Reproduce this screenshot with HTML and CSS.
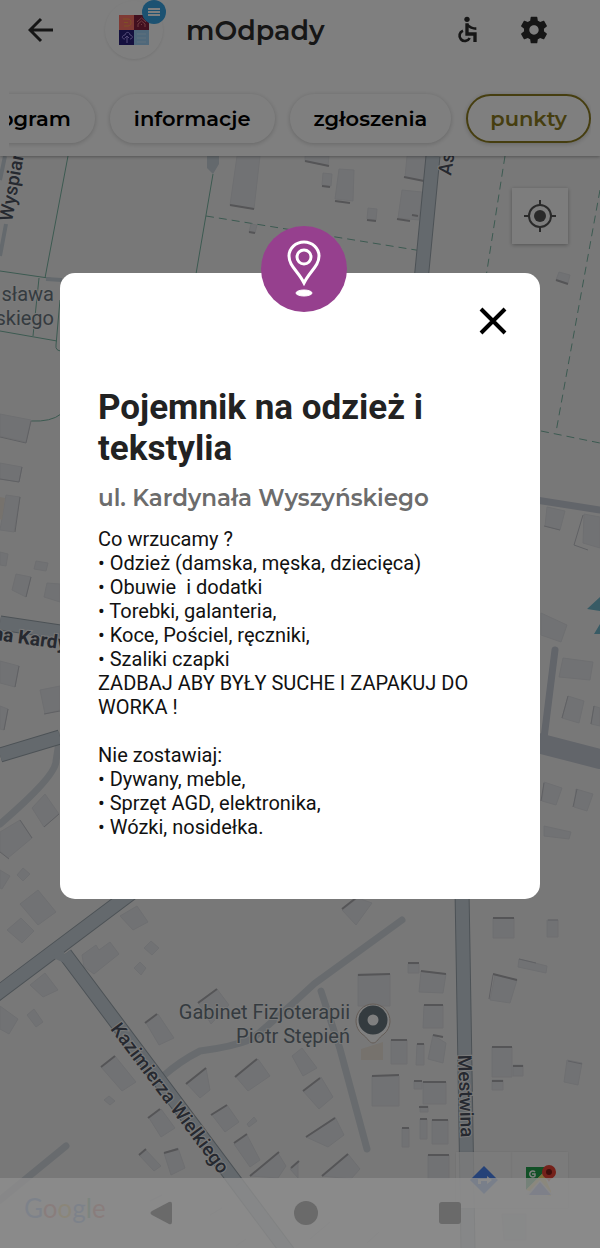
FILE: index.html
```html
<!DOCTYPE html>
<html lang="pl">

<head>
    <meta charset="UTF-8">
    <meta name="viewport" content="width=device-width, initial-scale=1.0">
    <title>mOdpady</title>
    <link rel="stylesheet" href="styles.css">
</head>

<body>
    <header class="header">
        <div class="top-bar">
            <button type="button" class="icon-btn back" aria-label="Wstecz">
                <svg width="26" height="26" viewBox="0 0 26 26" fill="none" stroke="#2c2c2c" stroke-width="3">
                    <path d="M25 13H3M13 2L2 13l11 11" />
                </svg>
            </button>
            <div class="logo">
                <svg width="30" height="30" viewBox="0 0 30 30">
                    <path fill="#ff7468" d="M0 0h15v15H0z" />
                    <path fill="#85203f" d="M15 0h15v15H15z" />
                    <path fill="#28207c" d="M0 15h15v15H0z" />
                    <path fill="#9ed0f4" d="M15 15h15v15H15z" />
                    <path fill="none" stroke="#ffa04a" stroke-width="1" d="M4 4h5c4 0 4 7 0 7H5M5 7.500h4" />
                    <path fill="none" stroke="#e07884" stroke-width="1" d="M18 7l4.500-4L27 7M19 12v-3l3.500-3L26 9v3M22.500 9v1" />
                    <path fill="none" stroke="#a898f0" stroke-width="1" d="M6 24c-4 0-3-4 0-4 1-4 5-3 5 0 3 0 3 4 0 4M8 28v-7M6 23l2-2 2 2" />
                    <path fill="none" stroke="#c0e2fa" stroke-width="1" d="M18 19h9M18 23h9M18 27h9" />
                </svg>
                <span class="badge">
                    <svg width="12" height="8" viewBox="0 0 12 8" stroke="#fff" stroke-width="2">
                        <path d="M0 1h12M0 4h12M0 7h12" />
                    </svg>
                </span>
            </div>
            <h1 class="title">mOdpady</h1>
            <button type="button" class="icon-btn" aria-label="Dostępność">
                <svg width="32" height="32" viewBox="0 0 24 24" fill="none" stroke="#2c2c2c" stroke-width="2">
                    <circle cx="12" cy="4" r="2" fill="#2c2c2c" stroke="none" />
                    <path d="M12 7v8h6v6" stroke-width="2.500" />
                    <path d="M12 8c2 2 4 3 7 3M9 12.500a4 4 0 1 0 5 5.500" />
                </svg>
            </button>
            <button type="button" class="icon-btn" aria-label="Ustawienia">
                <svg width="32" height="32" viewBox="0 0 24 24" fill="#2c2c2c">
                    <path d="M19.430 12.980c.040-.320.070-.640.070-.980s-.030-.660-.070-.980l2.110-1.650c.190-.150.240-.420.120-.640l-2-3.460c-.120-.220-.390-.300-.610-.220l-2.490 1c-.520-.400-1.080-.730-1.690-.980l-.380-2.650A.490.490 0 0 0 14 2h-4c-.250 0-.460.180-.490.420l-.380 2.650c-.610.250-1.170.590-1.690.980l-2.490-1c-.230-.090-.490 0-.610.220l-2 3.460c-.130.220-.070.490.120.640l2.110 1.650c-.040.320-.070.650-.070.980s.030.660.070.980l-2.110 1.650c-.190.150-.240.420-.120.640l2 3.460c.120.220.390.300.610.220l2.490-1c.520.400 1.080.730 1.690.980l.380 2.650c.030.240.240.420.490.420h4c.250 0 .460-.180.490-.420l.380-2.650c.610-.250 1.170-.590 1.690-.980l2.490 1c.230.090.490 0 .610-.220l2-3.460c.120-.220.070-.490-.120-.640l-2.110-1.650zM12 15.500c-1.930 0-3.500-1.570-3.500-3.500s1.570-3.500 3.500-3.500 3.500 1.570 3.500 3.500-1.570 3.500-3.500 3.500z" />
                </svg>
            </button>
        </div>
        <nav class="tabs">
            <a href="#" class="tab">harmonogram</a>
            <a href="#" class="tab">informacje</a>
            <a href="#" class="tab">zgłoszenia</a>
            <a href="#" class="tab active">punkty</a>
        </nav>
    </header>

    <main class="map">
        <svg class="map-canvas" viewBox="0 156 600 1092" preserveAspectRatio="xMidYMin slice">
            <!-- parcels -->
            <g class="parcel">
                <path d="M68 156L45 278M0 271l62 9M39 278l-6 58M0 331l57 10M60 300l-4 45q-1 6 6 6M213 174l-17 100M31 421q20 1 30-7" />
                <path class="dashed" d="M206 216l216 35M505 156l-22 140M600 190l-44 242M541 431l59 12" />
            </g>

            <!-- buildings -->
            <g class="building">
                <path d="M237 156h23l-6 53-24-4zM251 224l6 1-2 8-6-1zM305 156h24l-1 10-23-5zM339 169l15 1-1 31-18-2zM323 173l9 1-1 12-9-1zM407 156h20l-3 25-19-4zM402 190l20 2-3 28-21-2zM368 208l9 1-1 11-9-1zM559 272l11 3-2 8-12-3z" />
                <path d="M0 414l31 6-5 22-26-6zM0 463l22 4-3 15-19-3zM6 495l14 2-6 35-14-2zM0 552l8 2-2 12-6-1zM36 561l12 2-2 8-12-2zM16 574l15 3-5 20-14-7zM47 583l13 1v18l-16-5zM0 661l19 5-4 21-15-4zM0 706l8 3-4 21-4-1zM40 690l20-4v24l-15 4zM32 808l13-14 14 20-15 13zM0 832l20-12 12 18-24 20-8-7zM17 875l6-7 7 6-7 7z" />
                <path d="M547 507l18 4-5 19-15-4zM584 514l16 3v31l-17-5zM541 613l26 12-6 17-20-7zM563 658l30 4-3 18-31-3zM568 696l16 5-5 22-17-5zM594 706l6 2v18l-9-2zM544 782l18 6-6 17-14-4zM576 789l17 5-6 17-13-4zM544 826l27 6-2 7-25-3z" />
                <path d="M0 870l10 6-8 13-2-1zM20 904l18-14 18 22-18 13zM7 930l14-12 13 13-12 12zM82 955l14-10 3 5 11-8 9 12-25 20-10-7zM120 916l17-10 11 16-15 8zM144 948l7-7 8 7-7 7zM134 968l6-6 6 6-5 7zM30 985l15-12 13 17-15 7zM0 1006l18 13-9 15-9-5zM27 1015l7-6 9 13-7 5zM198 1002l19-13 12 16-18 19zM146 1023l12-9 16 24-15 7zM101 1067l14-11 21 26-14 9zM104 1100l5-4 6 5-5 4zM149 1118l12-9 14 19-14 9z" />
                <path d="M186 1083l20-15 4 22-10 8zM236 1077l22-18 12 17-22 15zM212 1115l15-10 12 17-14 10zM247 1124l7-7 3 4-8 6zM234 1144l13-9 13 25-10 7zM250 1176l28-23 8 13-8 12zM290 1169l8-8v17zM292 1056l10-8 15 20-14 8zM303 1091l18-14 12 20-14 12zM306 1137l29-20 9 18-16 12zM322 1176l26-22 12 15-9 10zM164 1153l14-5 7 20-14 7zM139 1155l6-6 16 17-7 5z" />
                <path d="M342 910l16-12 14 5-16 22zM358 974h32v32h-32zM408 964h11v9h-11zM421 971l25 3-3 19-24-1zM424 1005h19v23h-20zM391 1040h16v24h-16zM417 1044h7v21h-8zM433 1035l13 8-3 20-15-4zM372 1076h27v30h-27zM423 1082h23v22h-23zM414 1081h8v8h-8zM420 1106h8v6h-8zM420 1119h7v20h-7zM402 1128h7v19h-7zM432 1120h16v24h-16zM428 1155h21v24h-21zM493 918h21v20h-21zM547 920h11v17h-11zM519 959l28 7-1 7-28-6zM495 975l22 5-7 23-20-3zM492 1047h20v30h-20zM513 1065h10v11h-10zM492 1080h11v10h-11zM567 1060l15 3-4 22-14-3z" />
                <path d="M150 1201l12-6M210 1215l12-7M236 1246l10-7M310 1239l20-17M367 1243l12-11M502 1214h24v26h-22z" />
            </g>
            <path class="shop" d="M0 497l5 1-3 22-2-1zM361 1049l22-7v18h-22z" />

            <!-- shaded walls of the buildings -->
            <path class="wall" d="M230 205l24 4M305 161l24 5M335 201l15 2M404 177l20 4M397 219l13 2M412 215l6 1M322 186l8 1M367 220l9 1M249 232l6 1M556 280l12 4" />
            <path class="wall thin" d="M0 437l26 6 5-22M0 479l19 3 3-15M15 532l5-35M26 597l5-20M15 687l4-21M4 730l4-21M44 714l16-3M44 827l15-13M20 820l12 18M0 852l9 7M544 526l16 4M583 515l-9 30 14 5M562 718l6-22M591 724l3-18M541 801l3-18M573 807l4-18" />
            <path class="wall" d="M342 909l14-11M358 975l32-1M421 971l25 3M424 1005h19M408 963h11M391 1040h16M372 1076l27-1M423 1082h23M432 1120h16M428 1155h21M419 1107h9M420 1119h7M402 1128h7M417 1044h7M433 1035l10 2M414 1081h8M493 918h21M493 974l24 6M492 1047h20M513 1066h10M492 1081h11M303 1091l17-13M306 1137l29-19M322 1176l26-22M235 1077l22-18M186 1084l20-16M211 1115l16-10M234 1143l13-9M250 1176l29-24M198 1003l19-14M145 1023l12-9M101 1067l14-11M148 1118l12-9M164 1153l14-4M139 1155l7-6M291 1168l8-7" />
            <path class="wall thin" d="M568 1061l14 3M548 920h10M519 959l17 4M493 975l-4 24" />

            <!-- minor roads -->
            <g class="road-minor">
                <path d="M402 920L314 984q-30 28-62 55-20 8-52 12-20 10-38 26" />
                <path d="M321 991l19 58 27 100M66 1146L0 1200" />
                <path class="grey" d="M536 500l64 10" />
                <path class="grey" d="M555 650l-12 96" />
                <path class="grey wide" d="M530 741l70 18" />
                <path d="M60 736l-4 25q0 15-56 63" />
            </g>

            <!-- streets -->
            <path class="street-edge" d="M60 632L0 623M60 737L0 755M138 888L-6 996M65 954l223 298M433 156l-12 125M462 890l6 360" />
            <path class="street" d="M60 632L0 623M60 737L0 755M138 888L-6 996M65 954l223 298M433 156l-12 125M462 890l6 360" />
            <path class="street narrow" d="M5 156L0 180M6 224L0 256M46 279l16 1" />
            <path class="junction" d="M207 156h12v8l-6 10-6-6zM63 950l-12 7 18 8z" />
            <path class="water" d="M587 609l13-12v14zM594 634l6-10v10z" />

            <g class="street-name">
                <text transform="translate(12 222) rotate(-80)">Wyspiań</text>
                <text transform="translate(451 176) rotate(-81)">Asn</text>
                <text class="major" transform="translate(-18 638) rotate(8)">ana Kardynała</text>
                <text transform="translate(110 1029) rotate(53)">Kazimierza Wielkiego</text>
                <text transform="translate(458 1055) rotate(88)">Mestwina</text>
            </g>
            <g class="poi-name">
                <text x="54" y="301">sława</text>
                <text x="54" y="325">skiego</text>
                <text x="350" y="1019">Gabinet Fizjoterapii</text>
                <text x="350" y="1043">Piotr Stępień</text>
            </g>
            <path class="poi-pin" d="M373 1043c-4 0-5-5-11-9a17 17 0 1 1 22 0c-6 4-7 9-11 9z" />
            <circle class="poi-dot" cx="373" cy="1020" r="10" />
            <text class="google" x="24" y="1218"><tspan fill="#4285f4">G</tspan><tspan fill="#ea4335">o</tspan><tspan fill="#fbbc05">o</tspan><tspan fill="#4285f4">g</tspan><tspan fill="#34a853">l</tspan><tspan fill="#ea4335">e</tspan></text>
        </svg>

        <button type="button" class="map-btn locate" aria-label="Moja lokalizacja">
            <svg width="32" height="32" viewBox="0 0 32 32" fill="none" stroke="#555" stroke-width="2">
                <circle cx="16" cy="16" r="11" />
                <circle cx="16" cy="16" r="6" fill="#555" stroke="none" />
                <path d="M16 0v6M16 26v6M0 16h6M26 16h6" />
            </svg>
        </button>
        <div class="map-links">
            <a href="#" class="map-btn" aria-label="Trasa">
                <svg width="28" height="28" viewBox="0 0 28 28">
                    <path fill="#4a84f0" d="M14 0l14 14-14 14L0 14z" />
                    <path fill="#fff" d="M8 18v-5h9v-3l5 4-5 4v-3h-6v3z" />
                </svg>
            </a>
            <a href="#" class="map-btn" aria-label="Mapy Google">
                <svg width="32" height="32" viewBox="0 0 32 32">
                    <path fill="#22a04c" d="M2 3h23L2 26z" />
                    <path fill="#fbdb70" d="M2 26L19 9l8 18v5z" />
                    <path fill="#e4e4ea" d="M2 31l14-15 13 15z" />
                    <path fill="#7890e8" d="M5 31l11-13 11 13z" />
                    <path fill="none" stroke="#fff" stroke-width="1.500" d="M11 8a3 3 0 1 0 0 4V10H8" />
                    <path fill="#ea4335" d="M25 18c-1-4-7-4-7-10a7 7 0 0 1 14 0c0 6-6 6-7 10z" />
                    <circle cx="25" cy="8" r="3" fill="#801c18" />
                </svg>
            </a>
        </div>
    </main>

    <div class="overlay">
        <section class="modal" role="dialog" aria-labelledby="point-name">
            <div class="modal-icon">
                <svg width="36" height="58" viewBox="0 0 36 58" fill="none" stroke="#fff" stroke-width="3">
                    <path d="M18 43C12 31 3 26 3 16a15 14 0 0 1 30 0c0 10-9 15-15 27z" />
                    <circle cx="18" cy="17" r="7" />
                    <ellipse cx="18" cy="53" rx="8" ry="3" fill="#fff" stroke-width="1" />
                </svg>
            </div>
            <button type="button" class="icon-btn close" aria-label="Zamknij">
                <svg width="28" height="28" viewBox="0 0 28 28" stroke="#000" stroke-width="4">
                    <path d="M2 2l24 24M26 2L2 26" />
                </svg>
            </button>
            <h2 class="modal-title" id="point-name">Pojemnik na odzież i tekstylia</h2>
            <h3 class="modal-address">ul. Kardynała Wyszyńskiego</h3>
            <p class="modal-text">Co wrzucamy ?
• Odzież (damska, męska, dziecięca)
• Obuwie  i dodatki
• Torebki, galanteria,
• Koce, Pościel, ręczniki,
• Szaliki czapki
ZADBAJ ABY BYŁY SUCHE I ZAPAKUJ DO WORKA !

Nie zostawiaj:
• Dywany, meble,
• Sprzęt AGD, elektronika,
• Wózki, nosidełka.</p>
        </section>
    </div>

    <footer class="system-nav">
        <button type="button" class="icon-btn" aria-label="Cofnij">
            <svg width="24" height="24" viewBox="0 0 24 24" fill="#6a6a6a">
                <path d="M2 10Q-1 12 2 14l17 9q3 1 3-2V3q0-3-3-2z" />
            </svg>
        </button>
        <button type="button" class="icon-btn" aria-label="Ekran główny">
            <svg width="24" height="24" viewBox="0 0 24 24" fill="#6a6a6a">
                <circle cx="12" cy="12" r="12" />
            </svg>
        </button>
        <button type="button" class="icon-btn" aria-label="Ostatnie">
            <svg width="24" height="24" viewBox="0 0 24 24" fill="#6a6a6a">
                <rect x="1" y="1" width="22" height="22" rx="3" />
            </svg>
        </button>
    </footer>
</body>

</html>
```
FILE: styles.css
```css
* {
    box-sizing: border-box;
}

body {
    margin: 0;
    min-height: 100vh;
    display: flex;
    flex-direction: column;
    font-family: Roboto, sans-serif;
    background-color: #fff;
    color: #000;
}

h1,
h2,
h3,
p {
    margin: 0;
}

.icon-btn {
    display: flex;
    padding: 0;
    border: none;
    background: none;
    cursor: pointer;
}

/* header */
.header {
    position: relative;
    z-index: 1;
    padding-bottom: 3px;
    background-color: #fff;
    box-shadow: 0 1px 3px rgba(0, 0, 0, 0.3);
}

.top-bar {
    display: flex;
    align-items: center;
    gap: 35px;
    height: 60px;
    padding: 0 50px 0 28px;
}

.back {
    margin-right: 16px;
}

.logo {
    position: relative;
    display: flex;
    align-items: center;
    justify-content: center;
    width: 58px;
    height: 58px;
    margin-right: -12px;
    border-radius: 50%;
    box-shadow: 0 1px 3px rgba(0, 0, 0, 0.1);
}

.badge {
    position: absolute;
    top: -1px;
    right: -3px;
    display: flex;
    align-items: center;
    justify-content: center;
    width: 24px;
    height: 24px;
    border-radius: 50%;
    background-color: #38a4e4;
}

.title {
    flex: 1;
    font-family: Montserrat, Inter, sans-serif;
    font-size: 27px;
    font-weight: 600;
    color: #2c2c2c;
}

.tabs {
    display: flex;
    justify-content: flex-end;
    gap: 15px;
    margin: 24px 9px 0;
    padding: 10px 0;
    overflow: hidden;
}

.tab {
    flex: none;
    padding: 0 22px;
    border: 2px solid transparent;
    border-radius: 25px;
    box-shadow: 0 1px 5px rgba(0, 0, 0, 0.2);
    font-family: Montserrat, Inter, sans-serif;
    font-size: 21px;
    font-weight: 600;
    line-height: 45px;
    color: #000;
    text-decoration: none;
}

.active {
    border-color: #8c7c20;
    color: #8c7c20;
}

/* map */
.map {
    position: relative;
    flex: 1;
    display: flex;
    overflow: hidden;
    background-color: #f1f1f1;
}

.map-canvas {
    width: 100%;
    min-height: 100%;
}

.parcel {
    fill: none;
    stroke: #78b4a2;
    stroke-width: 1;
}

.dashed {
    stroke-dasharray: 8 5;
}

.building {
    fill: #e3e4e8;
    stroke: #dcdee2;
}

.shop {
    fill: #ece4da;
}

.wall {
    fill: none;
    stroke: #aaaaae;
    stroke-width: 2;
}

.thin {
    stroke: #c0c2c8;
    stroke-width: 1;
}

.road-minor {
    fill: none;
    stroke: #d1d7dc;
    stroke-width: 7;
    stroke-linecap: round;
}

.grey {
    stroke: #c5cad4;
}

.wide {
    stroke-width: 20;
}

.street,
.street-edge {
    fill: none;
    stroke: #c8d2da;
    stroke-width: 13;
}

.street-edge {
    stroke: #99a4ac;
    stroke-width: 15;
}

.street.narrow {
    stroke-width: 4;
}

.junction {
    fill: #c8d2da;
}

.water {
    fill: #70b6ca;
}

.street-name {
    font-size: 19px;
    font-weight: 500;
    fill: #4c5260;
    stroke: #f4f4f4;
    stroke-width: 2;
    paint-order: stroke;
}

.major {
    font-weight: 700;
}

.poi-name {
    font-size: 20px;
    fill: #6b7780;
    stroke: #f4f4f4;
    stroke-width: 2;
    paint-order: stroke;
    text-anchor: end;
}

.poi-pin {
    fill: #fff;
    stroke: #c8b8ac;
    stroke-width: 1;
}

.poi-dot {
    fill: #fff;
    stroke: #68767e;
    stroke-width: 9;
}

.google {
    font-family: Lato, sans-serif;
    font-size: 26px;
    opacity: 0.7;
}

.map-btn {
    display: flex;
    align-items: center;
    justify-content: center;
    width: 56px;
    height: 56px;
    padding: 0;
    border: none;
    background-color: #fafafa;
    box-shadow: 0 1px 4px rgba(0, 0, 0, 0.3);
    cursor: pointer;
}

.locate {
    position: absolute;
    top: 32px;
    right: 32px;
}

.map-links {
    position: absolute;
    right: 32px;
    bottom: 40px;
    display: flex;
}

.map-links .map-btn {
    background-color: rgba(248, 248, 248, 0.8);
    box-shadow: 0 0 2px rgba(0, 0, 0, 0.1);
}

/* point details */
.overlay {
    position: fixed;
    inset: 0;
    z-index: 2;
    display: flex;
    align-items: center;
    justify-content: center;
    padding-bottom: 76px;
    background-color: rgba(0, 0, 0, 0.5);
}

.modal {
    position: relative;
    width: 80%;
    padding: 34px 33px 60px 38px;
    border-radius: 15px;
    background-color: #fff;
}

.modal-icon {
    position: absolute;
    top: -47px;
    left: 50%;
    display: flex;
    align-items: center;
    justify-content: center;
    width: 86px;
    height: 86px;
    margin-left: -39px;
    border-radius: 50%;
    background-color: #96408e;
}

.close {
    margin-left: auto;
    margin-bottom: 52px;
}

.modal-title {
    font-size: 35px;
    line-height: 41px;
    color: #222;
}

.modal-address {
    margin: 14px 0;
    font-family: Montserrat, Inter, sans-serif;
    font-size: 23px;
    font-weight: 600;
    line-height: 30px;
    color: #6c6c6c;
}

.modal-text {
    font-size: 20px;
    line-height: 24px;
    color: #111;
    white-space: pre-wrap;
}

/* system bar */
.system-nav {
    position: fixed;
    right: 0;
    bottom: 0;
    left: 0;
    z-index: 3;
    display: flex;
    align-items: center;
    justify-content: space-between;
    height: 70px;
    padding: 0 23% 0 25%;
    background-color: rgba(143, 143, 143, 0.8);
}
```
